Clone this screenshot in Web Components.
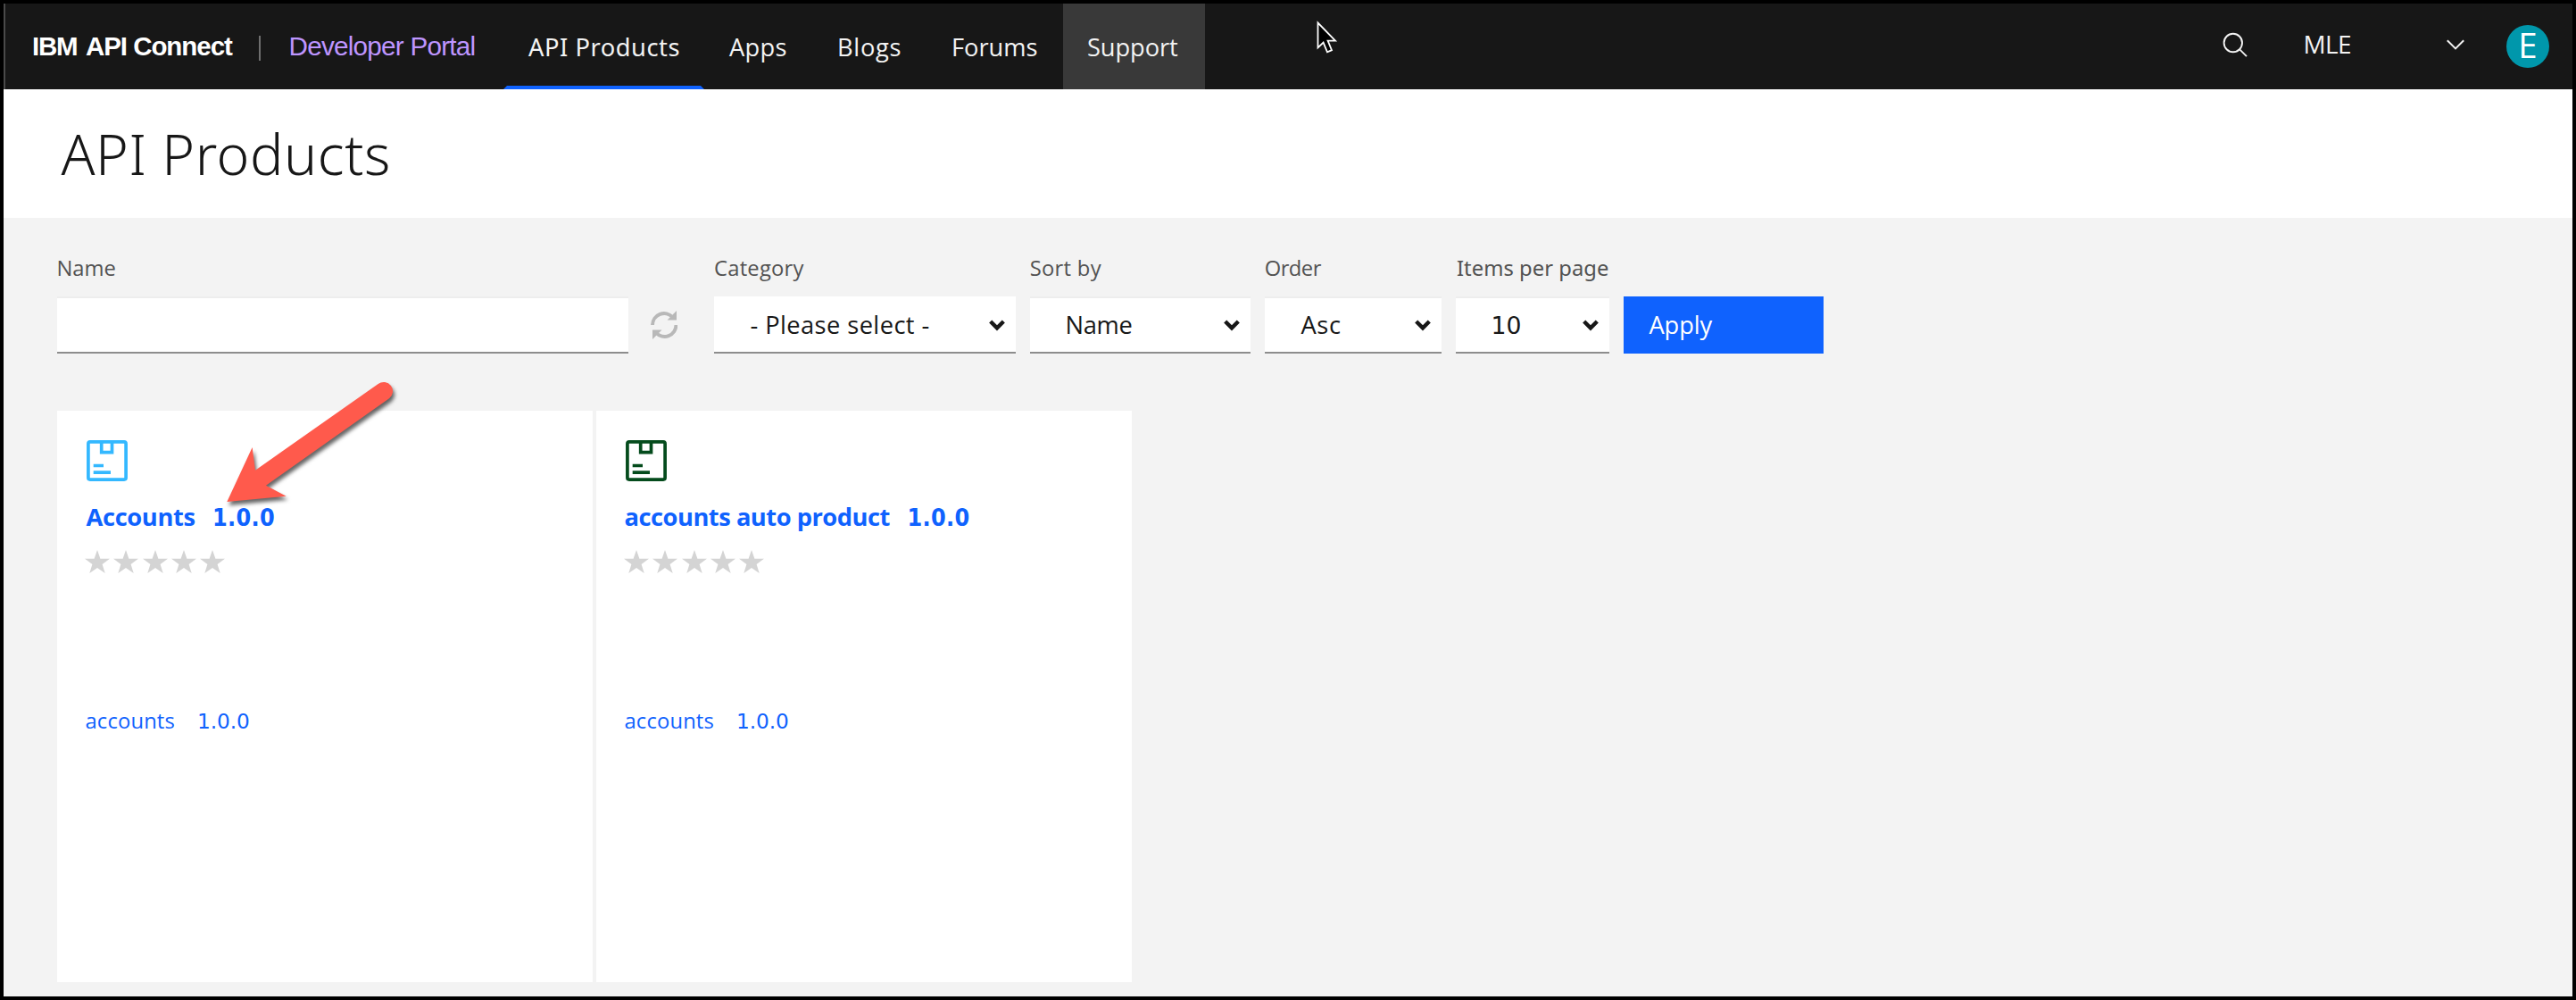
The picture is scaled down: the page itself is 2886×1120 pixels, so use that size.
<!DOCTYPE html>
<html lang="en">
<head>
<meta charset="utf-8">
<title>API Products</title>
<style>
html, body { margin: 0; padding: 0; background: #000; }
body { width: 2886px; height: 1120px; overflow: hidden; font-family: "Open Sans", sans-serif; }
</style>
</head>
<body>
<portal-page></portal-page>
<script>
const SANS = '"Open Sans", sans-serif';
const SLAB = '"Noto Sans", sans-serif';
const DIGITS = '"DejaVu Sans", sans-serif';
const DIGITS_BOLD = '"DejaVu Sans Condensed", "DejaVu Sans", sans-serif';
const GROTESK = '"Liberation Sans", sans-serif';
const STAR = '<svg width="28" height="26" viewBox="0 0 28 26"><path d="M14 0 17.4 9.7H28L19.6 15.9 22.7 26 14 20.1 5.3 26 8.4 15.9 0 9.7H10.600z"/></svg>';
const pen = document.createElement('canvas').getContext('2d');

function define(name, css, html, ready) {
  const tpl = document.createElement('template');
  tpl.innerHTML = `<style>:host{display:block;box-sizing:border-box}*{box-sizing:border-box}${css}</style>${html}`;
  customElements.define(name, class extends HTMLElement {
    connectedCallback() {
      if (this.shadowRoot) return;
      const root = this.attachShadow({ mode: 'open' });
      root.append(tpl.content.cloneNode(true));
      if (ready) ready(this, root);
    }
  });
}

/* A label whose box is its ink: width "w", capital height "cap". */
define('cap-text', `
  :host{display:flow-root;flex:none}
  span{display:block;white-space:pre}
`, '<span></span>', (el, root) => {
  const span = root.querySelector('span');
  const text = el.getAttribute('text');
  const w = +el.getAttribute('w'), cap = +el.getAttribute('cap');
  const weight = el.getAttribute('weight') || 400;
  const font = { slab: SLAB, digits: DIGITS, 'digits-bold': DIGITS_BOLD, grotesk: GROTESK }[el.getAttribute('face')] || SANS;
  pen.font = `${weight} 200px ${font}`;
  const size = cap * 200 / pen.measureText('H').actualBoundingBoxAscent;
  pen.font = `${weight} ${size}px ${font}`;
  const m = pen.measureText(text);
  const ink = m.actualBoundingBoxRight + m.actualBoundingBoxLeft;
  const track = text.length > 1 ? (w - ink) / (text.length - 1) : 0;
  const lift = cap / 2 - (Math.round(m.fontBoundingBoxAscent) - Math.round(m.fontBoundingBoxDescent)) / 2;
  el.style.cssText += `;width:${w}px;height:${cap}px`;
  span.textContent = text;
  span.style.cssText = `font:${weight} ${size}px/${cap}px ${font};letter-spacing:${track}px;margin-left:${m.actualBoundingBoxLeft}px;margin-top:${lift}px;width:max-content`;
});

define('nav-item', `
  :host{display:flex;align-items:flex-start;height:96px;padding:40px 0 0 28px;color:#f3f3f3;flex:none}
  :host([hover]){background:#393939}
  .bar{display:none}
  :host([active]){flex-direction:column;justify-content:space-between}
  :host([active]) .bar{display:block;width:225px;height:4px;margin-left:-28px;background:#0f62fe;clip-path:polygon(4px 0,221px 0,100% 100%,0 100%)}
`, '<slot></slot><div class="bar"></div>');

define('portal-header', `
  :host{display:flex;height:96px;background:#171717;border-left:2px solid #4a4a4a;color:#f3f3f3}
  .brand{display:flex;align-items:flex-start;padding:38px 0 0 31px;width:558px;color:#fff;flex:none}
  .rule{width:2px;height:28px;margin:-2px 33.5px 0 29px;background:#6f6f6f}
  .purple{color:#be95ff}
  nav{display:flex;flex:1}
  .tools{display:flex;align-items:flex-start;flex:none;padding-right:26px}
  svg{display:block;fill:none;stroke:#f3f3f3;flex:none}
  .avatar{display:flex;align-items:flex-start;justify-content:center;padding-top:10px;width:48px;height:48px;border-radius:50%;background:#0097ab;color:#fff;margin:24px 0 0 47px}
`, `
  <div class="brand">
    <cap-text text="IBM" w="49" cap="20.5" face="grotesk" weight="700"></cap-text>
    <cap-text style="margin-left:10px" text="API Connect" w="165" cap="20.5" face="grotesk" weight="700"></cap-text>
    <div class="rule"></div>
    <cap-text class="purple" text="Developer Portal" w="206" cap="20.5" face="grotesk"></cap-text>
  </div>
  <nav>
    <nav-item active style="width:225px"><cap-text text="API Products" w="168.5" cap="19.5" face="slab" weight="450"></cap-text></nav-item>
    <nav-item style="width:123px"><cap-text text="Apps" w="63.5" cap="19.5" weight="450"></cap-text></nav-item>
    <nav-item style="width:128px"><cap-text text="Blogs" w="68.5" cap="19.5" weight="450"></cap-text></nav-item>
    <nav-item style="width:151px"><cap-text text="Forums" w="93.5" cap="19.5" weight="450"></cap-text></nav-item>
    <nav-item hover style="width:159px"><cap-text text="Support" w="101" cap="19.5" weight="450"></cap-text></nav-item>
  </nav>
  <div class="tools">
    <svg style="margin-top:32px" width="28" height="28" viewBox="0 0 28 28" stroke-width="1.9"><circle cx="11.8" cy="12" r="10.2"/><path d="M19.2 19.4 27 27.2"/></svg>
    <cap-text style="margin:36px 0 0 64.5px" text="MLE" w="50.5" cap="20" weight="500"></cap-text>
    <svg style="margin:40px 0 0 108px" width="20" height="12" viewBox="0 0 20 12" stroke-width="2"><path d="M.8 1.3 10 10.4 19.2 1.3"/></svg>
    <div class="avatar"><cap-text text="E" w="15.5" cap="27.5"></cap-text></div>
  </div>
`);

define('page-title', `
  :host{height:144px;background:#fff;padding:51px 0 0 64.5px;color:#171717}
`, '<cap-text text="API Products" w="366.5" cap="45" face="slab" weight="300"></cap-text>');

define('filter-field', `
  :host{display:flex;flex-direction:column;flex:none;color:#525252}
  .label{height:40px;display:flex;align-items:flex-start}
  .control{height:64px;display:flex;align-items:flex-start;justify-content:space-between;padding:22.5px 12px 0 41.5px;background:#fff;color:#171717;border-bottom:2px solid #8d8d8d;box-shadow:inset 0 2px #ededed}
  :host([plain]) .control{box-shadow:none}
  svg{display:none;margin-top:3px;fill:none;stroke:#171717;stroke-width:4.4}
  :host([select]) svg{display:block}
`, `
  <div class="label"><slot name="label"></slot></div>
  <div class="control"><slot></slot><svg width="18" height="13" viewBox="0 0 18 13"><path d="M1.7 2 9 9.4 16.3 2"/></svg></div>
`);

define('filter-bar', `
  :host{display:flex;align-items:flex-start;padding-top:48px;height:216px}
  .refresh{display:block;margin:56px 41px 0 25px;flex:none}
  .gap{margin-right:16px}
  button{display:flex;align-items:flex-start;width:224px;height:64px;margin:40px 0 0 16px;padding:23px 0 0 28.5px;border:0;background:#0f62fe;color:#fff}
`, `
  <filter-field style="width:640px"><cap-text slot="label" style="margin-left:1.5px" text="Name" w="64" cap="17"></cap-text></filter-field>
  <svg class="refresh" width="30" height="32" viewBox="0 0 30 32" fill="none" stroke="#b8b8b8" stroke-width="4"><path d="M2 16A13 13.3 0 0 1 24.5 7.300M28.500 16A13 13.3 0 0 1 6 24.700"/><path fill="#b8b8b8" stroke="none" d="M29 0V10.500H18.500zM2 32V21.500H12.500z"/></svg>
  <filter-field class="gap" select plain style="width:338px"><cap-text slot="label" style="margin-left:1px" text="Category" w="99.5" cap="17"></cap-text><cap-text text="- Please select -" w="199" cap="19.5"></cap-text></filter-field>
  <filter-field class="gap" select style="width:247px"><cap-text slot="label" style="margin-left:.7px" text="Sort by" w="79" cap="17"></cap-text><cap-text text="Name" w="72" cap="19.5"></cap-text></filter-field>
  <filter-field class="gap" select style="width:198px"><cap-text slot="label" style="margin-left:.7px" text="Order" w="63" cap="17"></cap-text><cap-text style="margin-left:-1px" text="Asc" w="44.5" cap="19.5"></cap-text></filter-field>
  <filter-field select style="width:172px"><cap-text slot="label" style="margin-left:1px" text="Items per page" w="170" cap="17" face="slab"></cap-text><cap-text text="10" w="31" cap="19.5" face="digits"></cap-text></filter-field>
  <button><cap-text text="Apply" w="71" cap="19.5" weight="450"></cap-text></button>
`);

define('product-icon', ':host{width:46px;height:46px}svg{display:block}', `
  <svg width="46" height="46" viewBox="0 0 46 46" fill="none" stroke="currentColor" stroke-width="3.7"><rect x="1.9" y="1.9" width="42.2" height="42.2" rx="2"/><path d="M16.7 2V13.7H28.5V2M7.7 28.5H19M7.7 36.2H27"/></svg>`);

define('star-rating', ':host{display:flex;gap:4.3px;height:26px}svg{display:block;fill:#d4d4d4;flex:none}', STAR.repeat(5));

define('product-card', `
  :host{display:flex;flex-direction:column;align-items:flex-start;width:600px;height:640px;padding:33px 0 0 32.5px;background:#fff;color:#0f62fe;flex:none}
  .row{display:flex;height:19.5px}
  star-rating{margin:27px 0 157px -1.5px}
  .title{margin-top:30.5px}
`, `
  <slot name="icon"></slot>
  <div class="row title"><slot name="title"></slot></div>
  <star-rating></star-rating>
  <div class="row"><slot name="api"></slot></div>
`);

define('portal-page', `
  :host{display:flex;flex-direction:column;position:relative;width:2886px;height:1120px;border:4px solid #000;background:#f3f3f3}
  main{padding-left:60px}
  .cards{display:flex;gap:4px}
  .cursor,.arrow{position:absolute;display:block}
  .cursor{left:1469px;top:17px}
  .arrow{left:226px;top:416px;overflow:visible;filter:drop-shadow(2px 4px 2px rgba(0,0,0,.6))}
`, `
  <portal-header></portal-header>
  <page-title></page-title>
  <main>
    <filter-bar></filter-bar>
    <div class="cards">
      <product-card>
        <product-icon slot="icon" style="color:#33b8ff;margin-left:.5px"></product-icon>
        <cap-text slot="title" text="Accounts" w="122" cap="19.5" weight="700"></cap-text>
        <cap-text slot="title" style="margin-left:21.5px" text="1.0.0" w="67" cap="19.5" weight="700" face="digits-bold"></cap-text>
        <cap-text slot="api" text="accounts" w="99" cap="17"></cap-text>
        <cap-text slot="api" style="margin-left:27.5px" text="1.0.0" w="56" cap="17" face="digits"></cap-text>
      </product-card>
      <product-card>
        <product-icon slot="icon" style="color:#044b1c;margin-left:.5px"></product-icon>
        <cap-text slot="title" text="accounts auto product" w="296" cap="19.5" weight="700"></cap-text>
        <cap-text slot="title" style="margin-left:22px" text="1.0.0" w="67" cap="19.5" weight="700" face="digits-bold"></cap-text>
        <cap-text slot="api" text="accounts" w="99" cap="17"></cap-text>
        <cap-text slot="api" style="margin-left:27.5px" text="1.0.0" w="56" cap="17" face="digits"></cap-text>
      </product-card>
    </div>
  </main>
  <svg class="cursor" width="26" height="40" viewBox="0 0 26 40"><path d="M3.5 4.5V32.5L9.6 26.6 14 37.3 19 35.2 14.6 24.7H23z" fill="#000" stroke="#fff" stroke-width="1.8"/></svg>
  <svg class="arrow" width="212" height="150" viewBox="0 0 636 450"><path fill="#ff5a4c" transform="translate(-540 0)" d="M613 426 698 243 708 320 1121 30A30 30 0 0 1 1158 79L744 371 812 407z"/></svg>
`);
</script>
</body>
</html>
